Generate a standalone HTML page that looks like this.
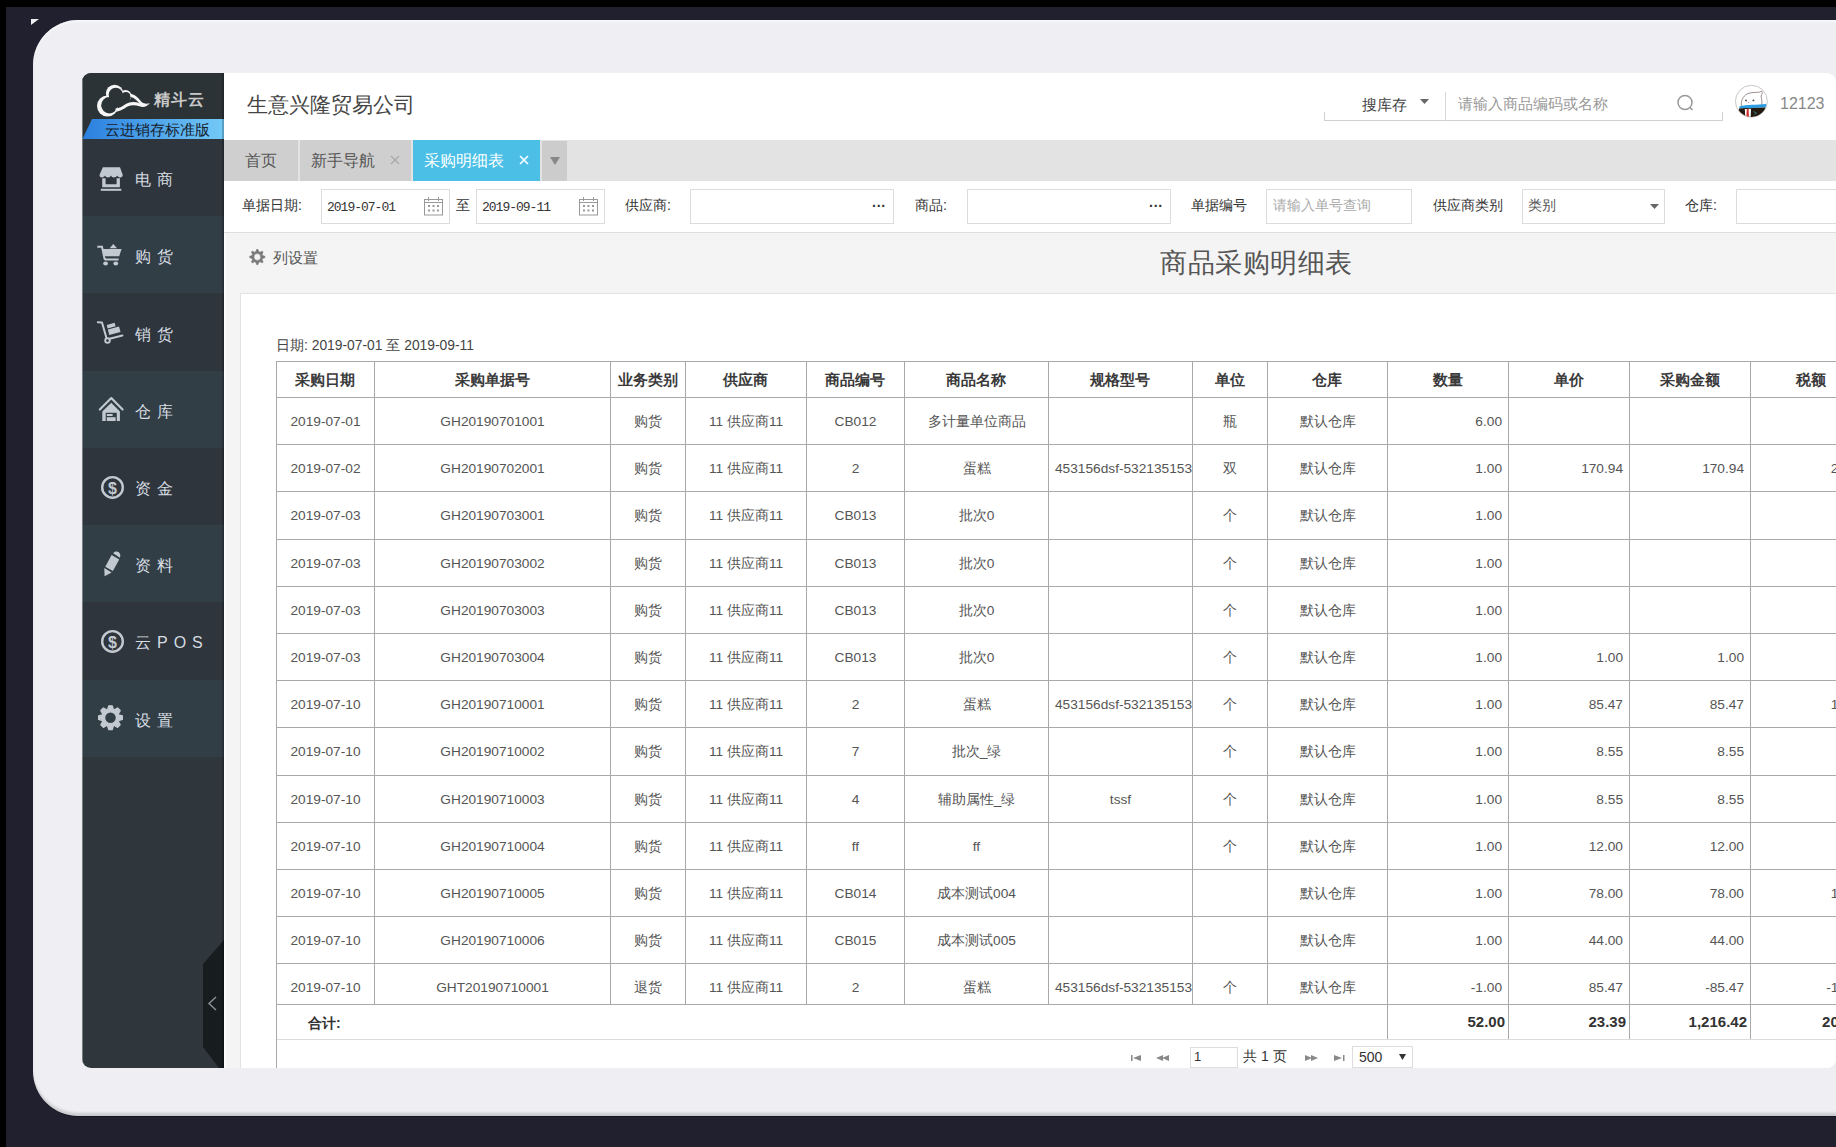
<!DOCTYPE html><html><head><meta charset="utf-8"><style>
*{margin:0;padding:0;box-sizing:border-box}
html,body{width:1836px;height:1147px;overflow:hidden}
body{position:relative;background:#21202f;font-family:"Liberation Sans",sans-serif;color:#333}
.abs{position:absolute}
.t{position:absolute;white-space:nowrap}
.frame{position:absolute;left:33px;top:20px;width:1900px;height:1096px;border-radius:45px;background:#efeef3;box-shadow:inset 0 -4px 3px -1px rgba(0,0,0,.16), inset 0 2px 2px rgba(255,255,255,.6), 0 1px 0 rgba(0,0,10,.35)}
.app{position:absolute;left:0;top:0;width:1836px;height:1147px;clip-path:inset(73px 0px 79px 82px round 9px);}
.side{position:absolute;left:82px;top:73px;width:142px;height:995px;background:#2f373d}
.mrow{position:absolute;left:82px;width:142px;height:77px}
.mtxt{position:absolute;left:135px;font-size:16px;font-weight:500;color:#d6dce2;letter-spacing:6px;white-space:nowrap}
.ic{position:absolute;fill:#c3c9d1}
.inp{position:absolute;border:1px solid #dcdcdc;background:#fff;height:35px;top:189px}
.lbl{position:absolute;font-size:14px;color:#333;top:197px;white-space:nowrap}
.cell{position:absolute;font-size:13.7px;color:#555;white-space:nowrap;overflow:hidden;padding:0 6px}
.hd{font-weight:bold;color:#3a3a3a;font-size:15px}
</style></head><body>
<div class="abs" style="left:0;top:0;width:1836px;height:7px;background:#000"></div>
<div class="abs" style="left:0;top:0;width:6px;height:1147px;background:#000"></div>
<svg class="abs" style="left:30px;top:18px" width="12" height="10"><polygon points="1,1 9,1 1,7" fill="#eeedf2"/></svg>
<div class="frame"></div>
<div class="app">
<div class="abs" style="left:82px;top:73px;width:1754px;height:995px;background:#fff"></div>
<div class="side"></div>
<div class="abs" style="left:82px;top:73px;width:142px;height:66px;background:#2b3336"></div>
<svg class="abs" style="left:92px;top:80px" width="60" height="40" viewBox="0 0 60 40">
<defs><mask id="cm" maskUnits="userSpaceOnUse" x="0" y="0" width="60" height="40">
<rect x="0" y="0" width="60" height="40" fill="#000"/>
<g fill="#fff">
<circle cx="15.5" cy="26" r="10.5"/>
<circle cx="22.6" cy="13.4" r="8.7"/>
<circle cx="33.5" cy="15.9" r="6"/>
</g>
<g fill="#000">
<circle cx="17.4" cy="25.2" r="8.2"/>
<circle cx="23.8" cy="14.8" r="7.1"/>
<circle cx="33.9" cy="17" r="4.9"/>
<rect x="23" y="16" width="14" height="8"/><polygon points="22,18 37.5,17 38.6,21.8 33,24.5 24.5,27.8 22,26"/>
</g>
<g fill="#fff">
<path d="M38.3 13.6 C44 15 47.5 19.5 49.6 22 C52 24 55 24 57.8 23.2 C55.5 25.3 51.5 25.8 48.3 24.6 C46 21.8 43 18.2 38.3 16.6 Z"/>
<path d="M23.5 28.6 C27.5 28.3 30.8 26.2 33.8 24.1 C37.8 21.4 43 21.3 48 23.4 C51.8 25.2 55 25.4 57.8 23.2 C55.3 26.6 51.2 27.7 47.4 26.3 C43 24.7 39.2 24.7 35.6 26.6 C32 28.6 28.3 31.6 23.5 31.8 Z"/>
</g>
</mask></defs>
<rect x="0" y="0" width="60" height="40" fill="#f6f6f6" mask="url(#cm)"/>
</svg>
<div class="t" style="left:154px;top:90px;font-size:16px;font-weight:bold;color:#c9c9c9;letter-spacing:1px">精斗云</div>
<svg class="abs" style="left:82px;top:119px" width="142" height="21"><defs><linearGradient id="bg1" x1="0" x2="1" y1="0" y2="0"><stop offset="0" stop-color="#2a7fde"/><stop offset="1" stop-color="#73caf7"/></linearGradient></defs><polygon points="10,0 142,0 142,21 0,21" fill="url(#bg1)"/></svg>
<div class="t" style="left:105px;top:121px;font-size:15px;color:#16202c">云进销存标准版</div>
<div class="mrow" style="top:139px;background:#2e353c"></div>
<div class="mrow" style="top:216px;background:#323e46"></div>
<div class="mrow" style="top:294px;background:#2e353c"></div>
<div class="mrow" style="top:371px;background:#323e46"></div>
<div class="mrow" style="top:448px;background:#2e353c"></div>
<div class="mrow" style="top:525px;background:#323e46"></div>
<div class="mrow" style="top:602px;background:#2e353c"></div>
<div class="mrow" style="top:680px;background:#323e46"></div>
<svg class="abs" style="left:94px;top:162px" width="34" height="34" viewBox="0 0 34 34"><g fill="#c3c9d1"><path d="M8.8 5.3 H26 L28.7 12.8 C28.9 14.6 27.4 15.5 26 15.4 C24.7 15.4 23.6 14.6 23.1 13.6 C22.6 14.8 21.4 15.5 20 15.5 C18.6 15.5 17.5 14.8 17 13.6 C16.5 14.8 15.4 15.5 14 15.5 C12.6 15.5 11.5 14.8 11 13.6 C10.5 14.6 9.4 15.4 8 15.4 C6.6 15.5 5.3 14.6 5.6 12.8 Z"/><path d="M8.2 16.2 H11.6 V22.3 H22.6 V16.2 H25.9 V25.2 H8.2 Z"/><rect x="6.8" y="26.8" width="20.5" height="2"/></g></svg>
<svg class="abs" style="left:94px;top:238px" width="34" height="34" viewBox="0 0 34 34"><g fill="#c3c9d1"><path d="M3.3 7.7 H8.8 L11.2 19.5 C11.4 20.3 11.9 20.6 12.6 20.6 H24.6 V22.6 H12.2 C10.6 22.6 9.7 21.6 9.4 20.2 L7.2 9.7 H3.3 Z"/><path d="M8.6 11 H27.6 L25.2 18.3 H10.4 Z"/><path d="M15.6 10.2 L19.3 6 L23 10.2 Z"/><ellipse cx="11.6" cy="25.4" rx="2.4" ry="2"/><ellipse cx="21.8" cy="25.4" rx="2.4" ry="2"/></g></svg>
<svg class="abs" style="left:94px;top:316px" width="34" height="34" viewBox="0 0 34 34"><polyline points="3.8,6.3 8,6.5 12.4,21.8" fill="none" stroke="#c3c9d1" stroke-width="2" stroke-linecap="round" stroke-linejoin="round"/><circle cx="13.5" cy="24.6" r="2.3" fill="none" stroke="#c3c9d1" stroke-width="1.9"/><line x1="15.6" y1="22.8" x2="28.4" y2="19.6" stroke="#c3c9d1" stroke-width="2.1" stroke-linecap="round"/><polygon points="12.8,9 20.6,6.8 21.6,10.2 13.6,12.4" fill="#c3c9d1"/><polygon points="13.9,13.6 25,10.6 26.5,16 15.2,19" fill="#c3c9d1"/></svg>
<svg class="abs" style="left:94px;top:392px" width="34" height="34" viewBox="0 0 34 34"><g fill="#c3c9d1"><polyline points="5.8,17.6 17.3,6 28.6,17.6" fill="none" stroke="#c3c9d1" stroke-width="2.1" stroke-linecap="round" stroke-linejoin="round"/><path d="M17.3 10.8 L25.9 19.4 V29 H22.8 V20.7 H11.7 V29 H8.3 V19.4 Z"/><rect x="12.8" y="22" width="5.8" height="2"/><rect x="12.8" y="25.2" width="8.8" height="3.8"/></g></svg>
<svg class="abs" style="left:94px;top:546px" width="34" height="34" viewBox="0 0 34 34"><g fill="#c3c9d1"><path d="M19.2 7.2 C20.4 5.2 23 5 24.8 6.3 C26.4 7.6 26.7 9.8 25.9 11.8 Z"/><polygon points="17.6,9 25.2,13.4 18.9,25 11.3,20.7"/><polygon points="10.3,22 17.6,26.4 10.6,30.3"/></g></svg>
<svg class="abs" style="left:94px;top:470px" width="34" height="34" viewBox="0 0 34 34"><circle cx="18.5" cy="17.4" r="10.3" fill="none" stroke="#c3c9d1" stroke-width="2.4"/><text x="18.4" y="24.2" text-anchor="middle" font-size="16" font-weight="bold" font-family="Liberation Sans" fill="#c3c9d1">$</text></svg>
<svg class="abs" style="left:94px;top:624px" width="34" height="34" viewBox="0 0 34 34"><circle cx="18.5" cy="17.4" r="10.3" fill="none" stroke="#c3c9d1" stroke-width="2.4"/><text x="18.4" y="24.2" text-anchor="middle" font-size="16" font-weight="bold" font-family="Liberation Sans" fill="#c3c9d1">$</text></svg>
<svg class="abs" style="left:94px;top:700px" width="34" height="34" viewBox="0 0 34 34"><path fill="#c3c9d1" fill-rule="evenodd" stroke="#c3c9d1" stroke-width="1.3" stroke-linejoin="round" d="M13.63 9.59 L14.71 5.83 L18.29 5.83 L19.37 9.59 L20.21 9.94 L23.62 8.04 L26.16 10.58 L24.26 13.99 L24.61 14.83 L28.37 15.91 L28.37 19.49 L24.61 20.57 L24.26 21.41 L26.16 24.82 L23.62 27.36 L20.21 25.46 L19.37 25.81 L18.29 29.57 L14.71 29.57 L13.63 25.81 L12.79 25.46 L9.38 27.36 L6.84 24.82 L8.74 21.41 L8.39 20.57 L4.63 19.49 L4.63 15.91 L8.39 14.83 L8.74 13.99 L6.84 10.58 L9.38 8.04 L12.79 9.94 Z M22.40 17.70 A5.90 5.90 0 1 0 10.60 17.70 A5.90 5.90 0 1 0 22.40 17.70 Z"/></svg>
<div class="mtxt" style="top:170px">电商</div>
<div class="mtxt" style="top:247px">购货</div>
<div class="mtxt" style="top:325px">销货</div>
<div class="mtxt" style="top:402px">仓库</div>
<div class="mtxt" style="top:479px">资金</div>
<div class="mtxt" style="top:556px">资料</div>
<div class="mtxt" style="top:633px">云POS</div>
<div class="mtxt" style="top:711px">设置</div>
<svg class="abs" style="left:203px;top:940px" width="21" height="128"><polygon points="21,0 0,24 0,107 16,128 21,128" fill="#171c1e"/><polyline points="13,57 6,63.5 13,70" fill="none" stroke="#8a8f93" stroke-width="1.5"/></svg>
<div class="t" style="left:247px;top:91px;font-size:21px;color:#444">生意兴隆贸易公司</div>
<div class="abs" style="left:1324px;top:120px;width:399px;height:1px;background:#d0d0d0"></div>
<div class="abs" style="left:1324px;top:112px;width:1px;height:9px;background:#d0d0d0"></div>
<div class="abs" style="left:1722px;top:112px;width:1px;height:9px;background:#d0d0d0"></div>
<div class="abs" style="left:1445px;top:92px;width:1px;height:29px;background:#d8d8d8"></div>
<div class="t" style="left:1362px;top:96px;font-size:15px;color:#444">搜库存</div>
<svg class="abs" style="left:1420px;top:99px" width="9" height="6"><polygon points="0,0 9,0 4.5,5" fill="#666"/></svg>
<div class="t" style="left:1458px;top:95px;font-size:15px;color:#999">请输入商品编码或名称</div>
<svg class="abs" style="left:1676px;top:94px" width="20" height="18"><circle cx="9" cy="8.5" r="7" fill="none" stroke="#999" stroke-width="1.5"/><line x1="14" y1="13.5" x2="16.5" y2="16" stroke="#999" stroke-width="1.5"/></svg>
<svg class="abs" style="left:1732px;top:82px" width="40" height="40" viewBox="0 0 40 40">
<defs><clipPath id="avc"><circle cx="19.4" cy="19.3" r="15.6"/></clipPath></defs>
<circle cx="19.4" cy="19.3" r="16" fill="#fff" stroke="#c8c8c8" stroke-width="1"/>
<g clip-path="url(#avc)">
<path d="M9.3 24 C8.8 17.5 12 12.8 17 11.2 C21 10.2 25 10.6 27.6 10.1 L29.6 9.1 C30.6 10.2 30.4 12.2 29 14 C29.9 17 30 20 29.8 23.5" fill="#fff" stroke="#8f8480" stroke-width="0.9"/>
<circle cx="14" cy="18.4" r="0.95" fill="#444"/><circle cx="21.4" cy="18.4" r="0.95" fill="#444"/>
<circle cx="16.6" cy="20.5" r="0.6" fill="#e77"/>
<path d="M7.6 24.2 C15 22.6 25 22.9 34.6 22 L33.6 25.6 C25 26 15 25.9 7.4 26.6 Z" fill="#2b9be3"/>
<path d="M7 26.6 C15 25.9 25 26 33.6 25.6 L35 40 H5 Z" fill="#24190f"/>
<polygon points="12.8,27 19,26.8 18.6,37 13.4,37" fill="#fff"/>
<polygon points="14.8,27 16.6,27 17,36 14.3,36" fill="#d42a2a"/>
<path d="M21.5 29.5 L24.5 31.2 L22.4 32.4" fill="none" stroke="#3a8a8a" stroke-width="0.8"/>
</g></svg>
<div class="t" style="left:1780px;top:95px;font-size:16px;color:#888">12123</div>
<div class="abs" style="left:224px;top:140px;width:1612px;height:41px;background:#e3e3e3"></div>
<div class="abs" style="left:224px;top:140px;width:74px;height:41px;background:#cfcfcf"></div>
<div class="t" style="left:245px;top:151px;font-size:16px;color:#555">首页</div>
<div class="abs" style="left:300px;top:140px;width:111px;height:41px;background:#cfcfcf"></div>
<div class="t" style="left:311px;top:151px;font-size:16px;color:#555">新手导航</div>
<svg class="abs" style="left:390px;top:155px" width="10" height="10"><path d="M1 1 L9 9 M9 1 L1 9" stroke="#aaa" stroke-width="1.3"/></svg>
<div class="abs" style="left:413px;top:140px;width:127px;height:41px;background:#4bbfe6"></div>
<div class="t" style="left:424px;top:151px;font-size:16px;color:#fff">采购明细表</div>
<svg class="abs" style="left:519px;top:155px" width="10" height="10"><path d="M1 1 L9 9 M9 1 L1 9" stroke="#fff" stroke-width="1.6"/></svg>
<div class="abs" style="left:542px;top:141px;width:25px;height:40px;background:#cccccc"></div>
<svg class="abs" style="left:550px;top:157px" width="10" height="8"><polygon points="0,0 10,0 5,8" fill="#888"/></svg>
<div class="abs" style="left:224px;top:232px;width:1612px;height:1px;background:#dedede"></div>
<div class="abs" style="left:224px;top:233px;width:1612px;height:835px;background:#f4f4f4"></div>
<div class="abs" style="left:224px;top:233px;width:2px;height:835px;background:#fbfbfb"></div>
<div class="abs" style="left:222px;top:73px;width:2px;height:995px;background:rgba(0,0,0,.22)"></div>
<div class="abs" style="left:82px;top:73px;width:1px;height:995px;background:rgba(255,255,255,.35)"></div>
<div class="lbl" style="left:242px">单据日期:</div>
<div class="inp" style="left:321px;width:129px"></div>
<div class="t" style="left:327px;top:200px;font-family:'Liberation Mono',monospace;font-size:13px;letter-spacing:-1px;color:#333">2019-07-01</div>
<svg class="abs" style="left:424px;top:197px" width="20" height="19" viewBox="0 0 20 19"><rect x="0.5" y="2.5" width="18" height="15.5" fill="none" stroke="#999"/><line x1="0.5" y1="5.5" x2="18.5" y2="5.5" stroke="#999"/><path d="M4.5 0 V4 M14.5 0 V4" stroke="#999"/><g fill="#999"><rect x="4" y="8" width="2" height="2"/><rect x="8.5" y="8" width="2" height="2"/><rect x="13" y="8" width="2" height="2"/><rect x="4" y="12.5" width="2" height="2"/><rect x="8.5" y="12.5" width="2" height="2"/><rect x="13" y="12.5" width="2" height="2"/></g></svg>
<div class="lbl" style="left:456px">至</div>
<div class="inp" style="left:476px;width:129px"></div>
<div class="t" style="left:482px;top:200px;font-family:'Liberation Mono',monospace;font-size:13px;letter-spacing:-1px;color:#333">2019-09-11</div>
<svg class="abs" style="left:579px;top:197px" width="20" height="19" viewBox="0 0 20 19"><rect x="0.5" y="2.5" width="18" height="15.5" fill="none" stroke="#999"/><line x1="0.5" y1="5.5" x2="18.5" y2="5.5" stroke="#999"/><path d="M4.5 0 V4 M14.5 0 V4" stroke="#999"/><g fill="#999"><rect x="4" y="8" width="2" height="2"/><rect x="8.5" y="8" width="2" height="2"/><rect x="13" y="8" width="2" height="2"/><rect x="4" y="12.5" width="2" height="2"/><rect x="8.5" y="12.5" width="2" height="2"/><rect x="13" y="12.5" width="2" height="2"/></g></svg>
<div class="lbl" style="left:625px">供应商:</div>
<div class="inp" style="left:690px;width:204px"></div>
<div class="t" style="left:872px;top:198px;font-size:14px;color:#333;font-weight:bold">···</div>
<div class="lbl" style="left:915px">商品:</div>
<div class="inp" style="left:967px;width:204px"></div>
<div class="t" style="left:1149px;top:198px;font-size:14px;color:#333;font-weight:bold">···</div>
<div class="lbl" style="left:1191px">单据编号</div>
<div class="inp" style="left:1266px;width:146px"></div>
<div class="t" style="left:1273px;top:197px;font-size:14px;color:#aaa">请输入单号查询</div>
<div class="lbl" style="left:1433px">供应商类别</div>
<div class="inp" style="left:1522px;width:143px"></div>
<div class="t" style="left:1528px;top:197px;font-size:14px;color:#555">类别</div>
<svg class="abs" style="left:1650px;top:204px" width="9" height="5"><polygon points="0,0 9,0 4.5,5" fill="#666"/></svg>
<div class="lbl" style="left:1685px">仓库:</div>
<div class="inp" style="left:1736px;width:150px"></div>
<svg class="abs" style="left:249px;top:249px" width="17" height="17" viewBox="0 0 17 17"><path fill="#7a7a7a" fill-rule="evenodd" stroke="#7a7a7a" stroke-width="0.5" stroke-linejoin="round" d="M6.86 2.59 L7.61 0.33 L8.99 0.33 L9.74 2.59 L11.11 3.16 L13.23 2.09 L14.21 3.07 L13.14 5.19 L13.71 6.56 L15.97 7.31 L15.97 8.69 L13.71 9.44 L13.14 10.81 L14.21 12.93 L13.23 13.91 L11.11 12.84 L9.74 13.41 L8.99 15.67 L7.61 15.67 L6.86 13.41 L5.49 12.84 L3.37 13.91 L2.39 12.93 L3.46 10.81 L2.89 9.44 L0.63 8.69 L0.63 7.31 L2.89 6.56 L3.46 5.19 L2.39 3.07 L3.37 2.09 L5.49 3.16 Z M11.70 8.00 A3.40 3.40 0 1 0 4.90 8.00 A3.40 3.40 0 1 0 11.70 8.00 Z"/></svg>
<div class="t" style="left:273px;top:249px;font-size:15px;color:#555">列设置</div>
<div class="t" style="left:1160px;top:245px;font-size:27px;letter-spacing:0.55px;color:#555">商品采购明细表</div>
<div class="abs" style="left:240px;top:293px;width:1600px;height:780px;background:#fff;border-top:1px solid #e3e3e3;border-left:1px solid #e3e3e3"></div>
<div class="t" style="left:276px;top:337px;font-size:13.85px;color:#444">日期: 2019-07-01 至 2019-09-11</div>
<div class="abs" style="left:276px;top:361px;width:1600px;height:1px;background:#a9a9a9"></div>
<div class="abs" style="left:276px;top:397px;width:1600px;height:1px;background:#a9a9a9"></div>
<div class="abs" style="left:276px;top:444px;width:1600px;height:1px;background:#a9a9a9"></div>
<div class="abs" style="left:276px;top:491px;width:1600px;height:1px;background:#a9a9a9"></div>
<div class="abs" style="left:276px;top:539px;width:1600px;height:1px;background:#a9a9a9"></div>
<div class="abs" style="left:276px;top:586px;width:1600px;height:1px;background:#a9a9a9"></div>
<div class="abs" style="left:276px;top:633px;width:1600px;height:1px;background:#a9a9a9"></div>
<div class="abs" style="left:276px;top:680px;width:1600px;height:1px;background:#a9a9a9"></div>
<div class="abs" style="left:276px;top:727px;width:1600px;height:1px;background:#a9a9a9"></div>
<div class="abs" style="left:276px;top:775px;width:1600px;height:1px;background:#a9a9a9"></div>
<div class="abs" style="left:276px;top:822px;width:1600px;height:1px;background:#a9a9a9"></div>
<div class="abs" style="left:276px;top:869px;width:1600px;height:1px;background:#a9a9a9"></div>
<div class="abs" style="left:276px;top:916px;width:1600px;height:1px;background:#a9a9a9"></div>
<div class="abs" style="left:276px;top:963px;width:1600px;height:1px;background:#a9a9a9"></div>
<div class="abs" style="left:276px;top:1004px;width:1600px;height:1px;background:#a9a9a9"></div>
<div class="abs" style="left:276px;top:361px;width:1px;height:643px;background:#a9a9a9"></div>
<div class="abs" style="left:374px;top:361px;width:1px;height:643px;background:#a9a9a9"></div>
<div class="abs" style="left:610px;top:361px;width:1px;height:643px;background:#a9a9a9"></div>
<div class="abs" style="left:685px;top:361px;width:1px;height:643px;background:#a9a9a9"></div>
<div class="abs" style="left:806px;top:361px;width:1px;height:643px;background:#a9a9a9"></div>
<div class="abs" style="left:904px;top:361px;width:1px;height:643px;background:#a9a9a9"></div>
<div class="abs" style="left:1048px;top:361px;width:1px;height:643px;background:#a9a9a9"></div>
<div class="abs" style="left:1192px;top:361px;width:1px;height:643px;background:#a9a9a9"></div>
<div class="abs" style="left:1267px;top:361px;width:1px;height:643px;background:#a9a9a9"></div>
<div class="abs" style="left:1387px;top:361px;width:1px;height:643px;background:#a9a9a9"></div>
<div class="abs" style="left:1508px;top:361px;width:1px;height:643px;background:#a9a9a9"></div>
<div class="abs" style="left:1629px;top:361px;width:1px;height:643px;background:#a9a9a9"></div>
<div class="abs" style="left:1750px;top:361px;width:1px;height:643px;background:#a9a9a9"></div>
<div class="abs" style="left:1871px;top:361px;width:1px;height:643px;background:#a9a9a9"></div>
<div class="cell hd" style="left:276px;top:362px;width:98px;height:35px;line-height:35px;text-align:center">采购日期</div>
<div class="cell hd" style="left:374px;top:362px;width:236px;height:35px;line-height:35px;text-align:center">采购单据号</div>
<div class="cell hd" style="left:610px;top:362px;width:75px;height:35px;line-height:35px;text-align:center">业务类别</div>
<div class="cell hd" style="left:685px;top:362px;width:121px;height:35px;line-height:35px;text-align:center">供应商</div>
<div class="cell hd" style="left:806px;top:362px;width:98px;height:35px;line-height:35px;text-align:center">商品编号</div>
<div class="cell hd" style="left:904px;top:362px;width:144px;height:35px;line-height:35px;text-align:center">商品名称</div>
<div class="cell hd" style="left:1048px;top:362px;width:144px;height:35px;line-height:35px;text-align:center">规格型号</div>
<div class="cell hd" style="left:1192px;top:362px;width:75px;height:35px;line-height:35px;text-align:center">单位</div>
<div class="cell hd" style="left:1267px;top:362px;width:120px;height:35px;line-height:35px;text-align:center">仓库</div>
<div class="cell hd" style="left:1387px;top:362px;width:121px;height:35px;line-height:35px;text-align:center">数量</div>
<div class="cell hd" style="left:1508px;top:362px;width:121px;height:35px;line-height:35px;text-align:center">单价</div>
<div class="cell hd" style="left:1629px;top:362px;width:121px;height:35px;line-height:35px;text-align:center">采购金额</div>
<div class="cell hd" style="left:1750px;top:362px;width:121px;height:35px;line-height:35px;text-align:center">税额</div>
<div class="cell" style="left:277px;top:399px;width:97px;height:46px;line-height:46px;text-align:center">2019-07-01</div>
<div class="cell" style="left:375px;top:399px;width:235px;height:46px;line-height:46px;text-align:center">GH20190701001</div>
<div class="cell" style="left:611px;top:399px;width:74px;height:46px;line-height:46px;text-align:center">购货</div>
<div class="cell" style="left:686px;top:399px;width:120px;height:46px;line-height:46px;text-align:center">11 供应商11</div>
<div class="cell" style="left:807px;top:399px;width:97px;height:46px;line-height:46px;text-align:center">CB012</div>
<div class="cell" style="left:905px;top:399px;width:143px;height:46px;line-height:46px;text-align:center">多计量单位商品</div>
<div class="cell" style="left:1193px;top:399px;width:74px;height:46px;line-height:46px;text-align:center">瓶</div>
<div class="cell" style="left:1268px;top:399px;width:119px;height:46px;line-height:46px;text-align:center">默认仓库</div>
<div class="cell" style="left:1388px;top:399px;width:120px;height:46px;line-height:46px;text-align:right;padding-right:6px">6.00</div>
<div class="cell" style="left:277px;top:446px;width:97px;height:46px;line-height:46px;text-align:center">2019-07-02</div>
<div class="cell" style="left:375px;top:446px;width:235px;height:46px;line-height:46px;text-align:center">GH20190702001</div>
<div class="cell" style="left:611px;top:446px;width:74px;height:46px;line-height:46px;text-align:center">购货</div>
<div class="cell" style="left:686px;top:446px;width:120px;height:46px;line-height:46px;text-align:center">11 供应商11</div>
<div class="cell" style="left:807px;top:446px;width:97px;height:46px;line-height:46px;text-align:center">2</div>
<div class="cell" style="left:905px;top:446px;width:143px;height:46px;line-height:46px;text-align:center">蛋糕</div>
<div class="cell" style="left:1049px;top:446px;width:143px;height:46px;line-height:46px;text-align:center">453156dsf-532135153</div>
<div class="cell" style="left:1193px;top:446px;width:74px;height:46px;line-height:46px;text-align:center">双</div>
<div class="cell" style="left:1268px;top:446px;width:119px;height:46px;line-height:46px;text-align:center">默认仓库</div>
<div class="cell" style="left:1388px;top:446px;width:120px;height:46px;line-height:46px;text-align:right;padding-right:6px">1.00</div>
<div class="cell" style="left:1509px;top:446px;width:120px;height:46px;line-height:46px;text-align:right;padding-right:6px">170.94</div>
<div class="cell" style="left:1630px;top:446px;width:120px;height:46px;line-height:46px;text-align:right;padding-right:6px">170.94</div>
<div class="cell" style="left:1751px;top:446px;width:120px;height:46px;line-height:46px;text-align:right;padding-right:6px">29.06</div>
<div class="cell" style="left:277px;top:493px;width:97px;height:46px;line-height:46px;text-align:center">2019-07-03</div>
<div class="cell" style="left:375px;top:493px;width:235px;height:46px;line-height:46px;text-align:center">GH20190703001</div>
<div class="cell" style="left:611px;top:493px;width:74px;height:46px;line-height:46px;text-align:center">购货</div>
<div class="cell" style="left:686px;top:493px;width:120px;height:46px;line-height:46px;text-align:center">11 供应商11</div>
<div class="cell" style="left:807px;top:493px;width:97px;height:46px;line-height:46px;text-align:center">CB013</div>
<div class="cell" style="left:905px;top:493px;width:143px;height:46px;line-height:46px;text-align:center">批次0</div>
<div class="cell" style="left:1193px;top:493px;width:74px;height:46px;line-height:46px;text-align:center">个</div>
<div class="cell" style="left:1268px;top:493px;width:119px;height:46px;line-height:46px;text-align:center">默认仓库</div>
<div class="cell" style="left:1388px;top:493px;width:120px;height:46px;line-height:46px;text-align:right;padding-right:6px">1.00</div>
<div class="cell" style="left:277px;top:541px;width:97px;height:46px;line-height:46px;text-align:center">2019-07-03</div>
<div class="cell" style="left:375px;top:541px;width:235px;height:46px;line-height:46px;text-align:center">GH20190703002</div>
<div class="cell" style="left:611px;top:541px;width:74px;height:46px;line-height:46px;text-align:center">购货</div>
<div class="cell" style="left:686px;top:541px;width:120px;height:46px;line-height:46px;text-align:center">11 供应商11</div>
<div class="cell" style="left:807px;top:541px;width:97px;height:46px;line-height:46px;text-align:center">CB013</div>
<div class="cell" style="left:905px;top:541px;width:143px;height:46px;line-height:46px;text-align:center">批次0</div>
<div class="cell" style="left:1193px;top:541px;width:74px;height:46px;line-height:46px;text-align:center">个</div>
<div class="cell" style="left:1268px;top:541px;width:119px;height:46px;line-height:46px;text-align:center">默认仓库</div>
<div class="cell" style="left:1388px;top:541px;width:120px;height:46px;line-height:46px;text-align:right;padding-right:6px">1.00</div>
<div class="cell" style="left:277px;top:588px;width:97px;height:46px;line-height:46px;text-align:center">2019-07-03</div>
<div class="cell" style="left:375px;top:588px;width:235px;height:46px;line-height:46px;text-align:center">GH20190703003</div>
<div class="cell" style="left:611px;top:588px;width:74px;height:46px;line-height:46px;text-align:center">购货</div>
<div class="cell" style="left:686px;top:588px;width:120px;height:46px;line-height:46px;text-align:center">11 供应商11</div>
<div class="cell" style="left:807px;top:588px;width:97px;height:46px;line-height:46px;text-align:center">CB013</div>
<div class="cell" style="left:905px;top:588px;width:143px;height:46px;line-height:46px;text-align:center">批次0</div>
<div class="cell" style="left:1193px;top:588px;width:74px;height:46px;line-height:46px;text-align:center">个</div>
<div class="cell" style="left:1268px;top:588px;width:119px;height:46px;line-height:46px;text-align:center">默认仓库</div>
<div class="cell" style="left:1388px;top:588px;width:120px;height:46px;line-height:46px;text-align:right;padding-right:6px">1.00</div>
<div class="cell" style="left:277px;top:635px;width:97px;height:46px;line-height:46px;text-align:center">2019-07-03</div>
<div class="cell" style="left:375px;top:635px;width:235px;height:46px;line-height:46px;text-align:center">GH20190703004</div>
<div class="cell" style="left:611px;top:635px;width:74px;height:46px;line-height:46px;text-align:center">购货</div>
<div class="cell" style="left:686px;top:635px;width:120px;height:46px;line-height:46px;text-align:center">11 供应商11</div>
<div class="cell" style="left:807px;top:635px;width:97px;height:46px;line-height:46px;text-align:center">CB013</div>
<div class="cell" style="left:905px;top:635px;width:143px;height:46px;line-height:46px;text-align:center">批次0</div>
<div class="cell" style="left:1193px;top:635px;width:74px;height:46px;line-height:46px;text-align:center">个</div>
<div class="cell" style="left:1268px;top:635px;width:119px;height:46px;line-height:46px;text-align:center">默认仓库</div>
<div class="cell" style="left:1388px;top:635px;width:120px;height:46px;line-height:46px;text-align:right;padding-right:6px">1.00</div>
<div class="cell" style="left:1509px;top:635px;width:120px;height:46px;line-height:46px;text-align:right;padding-right:6px">1.00</div>
<div class="cell" style="left:1630px;top:635px;width:120px;height:46px;line-height:46px;text-align:right;padding-right:6px">1.00</div>
<div class="cell" style="left:1751px;top:635px;width:120px;height:46px;line-height:46px;text-align:right;padding-right:6px">0.17</div>
<div class="cell" style="left:277px;top:682px;width:97px;height:46px;line-height:46px;text-align:center">2019-07-10</div>
<div class="cell" style="left:375px;top:682px;width:235px;height:46px;line-height:46px;text-align:center">GH20190710001</div>
<div class="cell" style="left:611px;top:682px;width:74px;height:46px;line-height:46px;text-align:center">购货</div>
<div class="cell" style="left:686px;top:682px;width:120px;height:46px;line-height:46px;text-align:center">11 供应商11</div>
<div class="cell" style="left:807px;top:682px;width:97px;height:46px;line-height:46px;text-align:center">2</div>
<div class="cell" style="left:905px;top:682px;width:143px;height:46px;line-height:46px;text-align:center">蛋糕</div>
<div class="cell" style="left:1049px;top:682px;width:143px;height:46px;line-height:46px;text-align:center">453156dsf-532135153</div>
<div class="cell" style="left:1193px;top:682px;width:74px;height:46px;line-height:46px;text-align:center">个</div>
<div class="cell" style="left:1268px;top:682px;width:119px;height:46px;line-height:46px;text-align:center">默认仓库</div>
<div class="cell" style="left:1388px;top:682px;width:120px;height:46px;line-height:46px;text-align:right;padding-right:6px">1.00</div>
<div class="cell" style="left:1509px;top:682px;width:120px;height:46px;line-height:46px;text-align:right;padding-right:6px">85.47</div>
<div class="cell" style="left:1630px;top:682px;width:120px;height:46px;line-height:46px;text-align:right;padding-right:6px">85.47</div>
<div class="cell" style="left:1751px;top:682px;width:120px;height:46px;line-height:46px;text-align:right;padding-right:6px">14.53</div>
<div class="cell" style="left:277px;top:729px;width:97px;height:46px;line-height:46px;text-align:center">2019-07-10</div>
<div class="cell" style="left:375px;top:729px;width:235px;height:46px;line-height:46px;text-align:center">GH20190710002</div>
<div class="cell" style="left:611px;top:729px;width:74px;height:46px;line-height:46px;text-align:center">购货</div>
<div class="cell" style="left:686px;top:729px;width:120px;height:46px;line-height:46px;text-align:center">11 供应商11</div>
<div class="cell" style="left:807px;top:729px;width:97px;height:46px;line-height:46px;text-align:center">7</div>
<div class="cell" style="left:905px;top:729px;width:143px;height:46px;line-height:46px;text-align:center">批次_绿</div>
<div class="cell" style="left:1193px;top:729px;width:74px;height:46px;line-height:46px;text-align:center">个</div>
<div class="cell" style="left:1268px;top:729px;width:119px;height:46px;line-height:46px;text-align:center">默认仓库</div>
<div class="cell" style="left:1388px;top:729px;width:120px;height:46px;line-height:46px;text-align:right;padding-right:6px">1.00</div>
<div class="cell" style="left:1509px;top:729px;width:120px;height:46px;line-height:46px;text-align:right;padding-right:6px">8.55</div>
<div class="cell" style="left:1630px;top:729px;width:120px;height:46px;line-height:46px;text-align:right;padding-right:6px">8.55</div>
<div class="cell" style="left:1751px;top:729px;width:120px;height:46px;line-height:46px;text-align:right;padding-right:6px">1.45</div>
<div class="cell" style="left:277px;top:777px;width:97px;height:46px;line-height:46px;text-align:center">2019-07-10</div>
<div class="cell" style="left:375px;top:777px;width:235px;height:46px;line-height:46px;text-align:center">GH20190710003</div>
<div class="cell" style="left:611px;top:777px;width:74px;height:46px;line-height:46px;text-align:center">购货</div>
<div class="cell" style="left:686px;top:777px;width:120px;height:46px;line-height:46px;text-align:center">11 供应商11</div>
<div class="cell" style="left:807px;top:777px;width:97px;height:46px;line-height:46px;text-align:center">4</div>
<div class="cell" style="left:905px;top:777px;width:143px;height:46px;line-height:46px;text-align:center">辅助属性_绿</div>
<div class="cell" style="left:1049px;top:777px;width:143px;height:46px;line-height:46px;text-align:center">tssf</div>
<div class="cell" style="left:1193px;top:777px;width:74px;height:46px;line-height:46px;text-align:center">个</div>
<div class="cell" style="left:1268px;top:777px;width:119px;height:46px;line-height:46px;text-align:center">默认仓库</div>
<div class="cell" style="left:1388px;top:777px;width:120px;height:46px;line-height:46px;text-align:right;padding-right:6px">1.00</div>
<div class="cell" style="left:1509px;top:777px;width:120px;height:46px;line-height:46px;text-align:right;padding-right:6px">8.55</div>
<div class="cell" style="left:1630px;top:777px;width:120px;height:46px;line-height:46px;text-align:right;padding-right:6px">8.55</div>
<div class="cell" style="left:1751px;top:777px;width:120px;height:46px;line-height:46px;text-align:right;padding-right:6px">1.45</div>
<div class="cell" style="left:277px;top:824px;width:97px;height:46px;line-height:46px;text-align:center">2019-07-10</div>
<div class="cell" style="left:375px;top:824px;width:235px;height:46px;line-height:46px;text-align:center">GH20190710004</div>
<div class="cell" style="left:611px;top:824px;width:74px;height:46px;line-height:46px;text-align:center">购货</div>
<div class="cell" style="left:686px;top:824px;width:120px;height:46px;line-height:46px;text-align:center">11 供应商11</div>
<div class="cell" style="left:807px;top:824px;width:97px;height:46px;line-height:46px;text-align:center">ff</div>
<div class="cell" style="left:905px;top:824px;width:143px;height:46px;line-height:46px;text-align:center">ff</div>
<div class="cell" style="left:1193px;top:824px;width:74px;height:46px;line-height:46px;text-align:center">个</div>
<div class="cell" style="left:1268px;top:824px;width:119px;height:46px;line-height:46px;text-align:center">默认仓库</div>
<div class="cell" style="left:1388px;top:824px;width:120px;height:46px;line-height:46px;text-align:right;padding-right:6px">1.00</div>
<div class="cell" style="left:1509px;top:824px;width:120px;height:46px;line-height:46px;text-align:right;padding-right:6px">12.00</div>
<div class="cell" style="left:1630px;top:824px;width:120px;height:46px;line-height:46px;text-align:right;padding-right:6px">12.00</div>
<div class="cell" style="left:1751px;top:824px;width:120px;height:46px;line-height:46px;text-align:right;padding-right:6px">2.04</div>
<div class="cell" style="left:277px;top:871px;width:97px;height:46px;line-height:46px;text-align:center">2019-07-10</div>
<div class="cell" style="left:375px;top:871px;width:235px;height:46px;line-height:46px;text-align:center">GH20190710005</div>
<div class="cell" style="left:611px;top:871px;width:74px;height:46px;line-height:46px;text-align:center">购货</div>
<div class="cell" style="left:686px;top:871px;width:120px;height:46px;line-height:46px;text-align:center">11 供应商11</div>
<div class="cell" style="left:807px;top:871px;width:97px;height:46px;line-height:46px;text-align:center">CB014</div>
<div class="cell" style="left:905px;top:871px;width:143px;height:46px;line-height:46px;text-align:center">成本测试004</div>
<div class="cell" style="left:1268px;top:871px;width:119px;height:46px;line-height:46px;text-align:center">默认仓库</div>
<div class="cell" style="left:1388px;top:871px;width:120px;height:46px;line-height:46px;text-align:right;padding-right:6px">1.00</div>
<div class="cell" style="left:1509px;top:871px;width:120px;height:46px;line-height:46px;text-align:right;padding-right:6px">78.00</div>
<div class="cell" style="left:1630px;top:871px;width:120px;height:46px;line-height:46px;text-align:right;padding-right:6px">78.00</div>
<div class="cell" style="left:1751px;top:871px;width:120px;height:46px;line-height:46px;text-align:right;padding-right:6px">13.26</div>
<div class="cell" style="left:277px;top:918px;width:97px;height:46px;line-height:46px;text-align:center">2019-07-10</div>
<div class="cell" style="left:375px;top:918px;width:235px;height:46px;line-height:46px;text-align:center">GH20190710006</div>
<div class="cell" style="left:611px;top:918px;width:74px;height:46px;line-height:46px;text-align:center">购货</div>
<div class="cell" style="left:686px;top:918px;width:120px;height:46px;line-height:46px;text-align:center">11 供应商11</div>
<div class="cell" style="left:807px;top:918px;width:97px;height:46px;line-height:46px;text-align:center">CB015</div>
<div class="cell" style="left:905px;top:918px;width:143px;height:46px;line-height:46px;text-align:center">成本测试005</div>
<div class="cell" style="left:1268px;top:918px;width:119px;height:46px;line-height:46px;text-align:center">默认仓库</div>
<div class="cell" style="left:1388px;top:918px;width:120px;height:46px;line-height:46px;text-align:right;padding-right:6px">1.00</div>
<div class="cell" style="left:1509px;top:918px;width:120px;height:46px;line-height:46px;text-align:right;padding-right:6px">44.00</div>
<div class="cell" style="left:1630px;top:918px;width:120px;height:46px;line-height:46px;text-align:right;padding-right:6px">44.00</div>
<div class="cell" style="left:1751px;top:918px;width:120px;height:46px;line-height:46px;text-align:right;padding-right:6px">7.48</div>
<div class="cell" style="left:277px;top:965px;width:97px;height:46px;line-height:46px;text-align:center">2019-07-10</div>
<div class="cell" style="left:375px;top:965px;width:235px;height:46px;line-height:46px;text-align:center">GHT20190710001</div>
<div class="cell" style="left:611px;top:965px;width:74px;height:46px;line-height:46px;text-align:center">退货</div>
<div class="cell" style="left:686px;top:965px;width:120px;height:46px;line-height:46px;text-align:center">11 供应商11</div>
<div class="cell" style="left:807px;top:965px;width:97px;height:46px;line-height:46px;text-align:center">2</div>
<div class="cell" style="left:905px;top:965px;width:143px;height:46px;line-height:46px;text-align:center">蛋糕</div>
<div class="cell" style="left:1049px;top:965px;width:143px;height:46px;line-height:46px;text-align:center">453156dsf-532135153</div>
<div class="cell" style="left:1193px;top:965px;width:74px;height:46px;line-height:46px;text-align:center">个</div>
<div class="cell" style="left:1268px;top:965px;width:119px;height:46px;line-height:46px;text-align:center">默认仓库</div>
<div class="cell" style="left:1388px;top:965px;width:120px;height:46px;line-height:46px;text-align:right;padding-right:6px">-1.00</div>
<div class="cell" style="left:1509px;top:965px;width:120px;height:46px;line-height:46px;text-align:right;padding-right:6px">85.47</div>
<div class="cell" style="left:1630px;top:965px;width:120px;height:46px;line-height:46px;text-align:right;padding-right:6px">-85.47</div>
<div class="cell" style="left:1751px;top:965px;width:120px;height:46px;line-height:46px;text-align:right;padding-right:6px">-14.53</div>
<div class="abs" style="left:276px;top:1004px;width:1px;height:64px;background:#a9a9a9"></div>
<div class="abs" style="left:1387px;top:1004px;width:1px;height:35px;background:#a9a9a9"></div>
<div class="abs" style="left:1508px;top:1004px;width:1px;height:35px;background:#a9a9a9"></div>
<div class="abs" style="left:1629px;top:1004px;width:1px;height:35px;background:#a9a9a9"></div>
<div class="abs" style="left:1750px;top:1004px;width:1px;height:35px;background:#a9a9a9"></div>
<div class="abs" style="left:277px;top:1039px;width:1600px;height:1px;background:#dcdcdc"></div>
<div class="t" style="left:308px;top:1015px;font-size:14px;font-weight:bold;color:#333">合计:</div>
<div class="cell" style="left:1388px;top:1005px;width:120px;height:34px;line-height:34px;text-align:right;padding-right:3px;font-weight:bold;font-size:15px;color:#333">52.00</div>
<div class="cell" style="left:1509px;top:1005px;width:120px;height:34px;line-height:34px;text-align:right;padding-right:3px;font-weight:bold;font-size:15px;color:#333">23.39</div>
<div class="cell" style="left:1630px;top:1005px;width:120px;height:34px;line-height:34px;text-align:right;padding-right:3px;font-weight:bold;font-size:15px;color:#333">1,216.42</div>
<div class="cell" style="left:1751px;top:1005px;width:120px;height:34px;line-height:34px;text-align:right;padding-right:3px;font-weight:bold;font-size:15px;color:#333">206.79</div>
<svg class="abs" style="left:1131px;top:1054px" width="14" height="9"><rect x="0" y="1" width="1.5" height="6" fill="#888"/><polygon points="2,4 10,1 10,7" fill="#888"/></svg>
<svg class="abs" style="left:1156px;top:1054px" width="16" height="9"><polygon points="0,4 7,1 7,7" fill="#888"/><polygon points="6,4 13,1 13,7" fill="#888"/></svg>
<div class="abs" style="left:1190px;top:1047px;width:48px;height:21px;border:1px solid #ddd;background:#fff"></div>
<div class="t" style="left:1194px;top:1049px;font-size:13px;color:#333">1</div>
<div class="t" style="left:1243px;top:1048px;font-size:14px;color:#333">共 1 页</div>
<svg class="abs" style="left:1305px;top:1054px" width="16" height="9"><polygon points="13,4 6,1 6,7" fill="#888"/><polygon points="7,4 0,1 0,7" fill="#888"/></svg>
<svg class="abs" style="left:1334px;top:1054px" width="14" height="9"><polygon points="8,4 0,1 0,7" fill="#888"/><rect x="9" y="1" width="1.5" height="6" fill="#888"/></svg>
<div class="abs" style="left:1352px;top:1046px;width:61px;height:22px;border:1px solid #ddd;background:#fff"></div>
<div class="t" style="left:1359px;top:1049px;font-size:14px;color:#333">500</div>
<svg class="abs" style="left:1399px;top:1054px" width="8" height="7"><polygon points="0,0 7,0 3.5,6" fill="#333"/></svg>
</div>
</body></html>
